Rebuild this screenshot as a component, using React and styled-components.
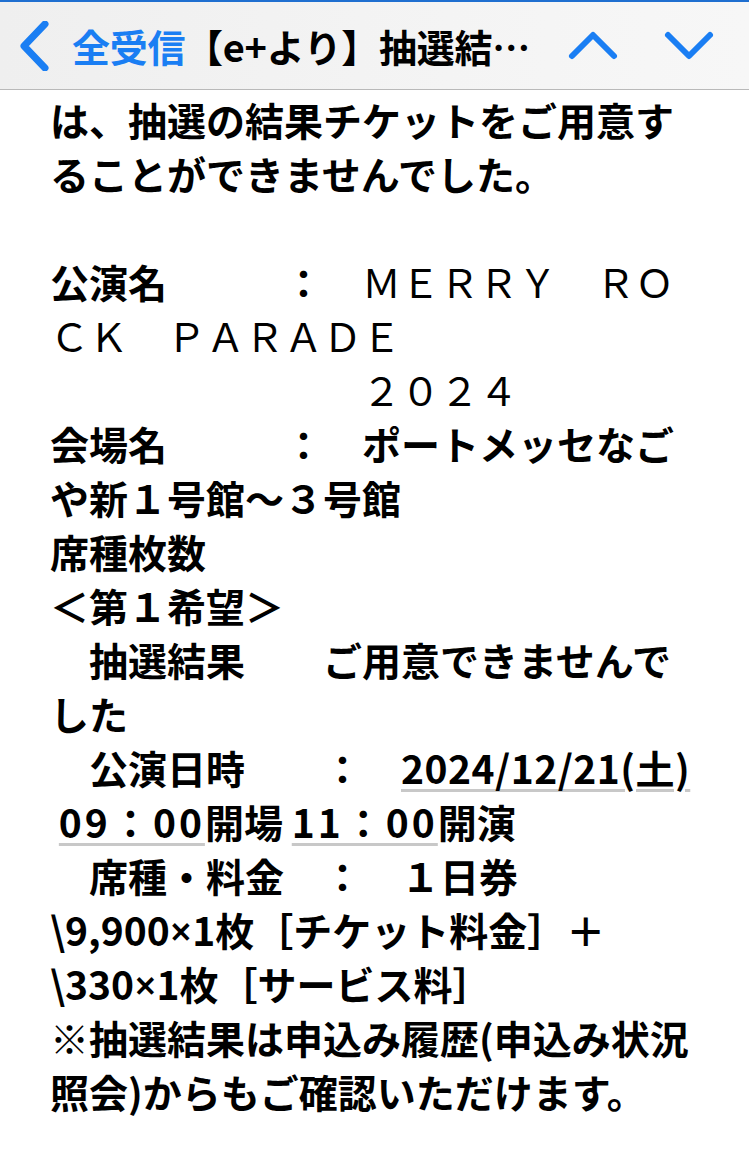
import React from "react";
import styled, { createGlobalStyle } from "styled-components";

const Global = createGlobalStyle`
  html, body { margin: 0; padding: 0; background: #ffffff; }
  body { font-family: "Noto Sans CJK JP", "Noto Sans", sans-serif; }
`;

const Screen = styled.div`
  width: 749px;
  min-height: 1170px;
  background: #ffffff;
  display: flex;
  flex-direction: column;
`;

const NavBar = styled.header`
  height: 87px;
  border-top: 2px solid #1f6fd0;
  border-bottom: 1px solid #b9b9b9;
  background: linear-gradient(90deg, #efefef 0%, #f4f4f4 60%, #f7f7f7 100%);
  display: flex;
  align-items: center;
  padding: 0 34px 0 14px;
`;

const IconButton = styled.svg`
  flex: none;
  display: block;
  margin-right: ${(p) => p.$gap || 0}px;
`;

const Title = styled.h1`
  flex: 1;
  margin: 0;
  font-size: 38px;
  font-weight: 700;
  letter-spacing: -0.3px;
  color: #000000;
  white-space: nowrap;
  line-height: 1.3;
`;

const Back = styled.span`
  color: #1a7ef3;
`;

const NavArrows = styled.div`
  display: flex;
  align-items: center;
  gap: 44px;
`;

const Body = styled.main`
  padding: 2px 20px 0 50px;
  color: #000000;
  font-size: 39px;
  font-weight: 700;
`;

const Line = styled.p`
  margin: 0;
  height: 54px;
  line-height: 54px;
  white-space: pre;
`;

const Wide = styled.span`
  font-weight: 400;
`;

const Narrow = styled.span`
  font-family: "Noto Sans", sans-serif;
  font-weight: 600;
`;

const Detected = styled.span`
  text-decoration: underline;
  text-decoration-color: #c8c8c8;
  text-decoration-thickness: 3px;
  text-underline-offset: 5px;
  letter-spacing: ${(p) => p.$spacing || 0}px;
`;

const BLUE = "#1a7ef3";

function Chevron({ dir, width, height, gap }) {
  const paths = {
    left: "M31 3 L10 25 L31 47",
    up: "M5 27 L26 6 L47 27",
    down: "M5 6 L26 27 L47 6",
  };
  const sw = dir === "left" ? 7 : 6;
  return (
    <IconButton
      width={width}
      height={height}
      viewBox={`0 0 ${width} ${height}`}
      $gap={gap}
      aria-hidden="true"
    >
      <path
        d={paths[dir]}
        fill="none"
        stroke={BLUE}
        strokeWidth={sw}
        strokeLinecap="round"
        strokeLinejoin="round"
      />
    </IconButton>
  );
}

export default function App() {
  return (
    <Screen>
      <Global />
      <NavBar>
        <Chevron dir="left" width={36} height={50} gap={22} />
        <Title>
          <Back>全受信</Back>【e+より】抽選結…
        </Title>
        <NavArrows>
          <Chevron dir="up" width={52} height={33} />
          <Chevron dir="down" width={52} height={33} />
        </NavArrows>
      </NavBar>
      <Body>
        <Line>は、抽選の結果チケットをご用意す</Line>
        <Line>ることができませんでした。</Line>
        <Line>{" "}</Line>
        <Line>
          {"公演名　　　：　"}
          <Wide>ＭＥＲＲＹ　ＲＯ</Wide>
        </Line>
        <Line>
          <Wide>ＣＫ　ＰＡＲＡＤＥ</Wide>
        </Line>
        <Line>
          <Wide>{"　　　　　　　　２０２４"}</Wide>
        </Line>
        <Line>{"会場名　　　：　ポートメッセなご"}</Line>
        <Line>や新１号館～３号館</Line>
        <Line>席種枚数</Line>
        <Line>＜第１希望＞</Line>
        <Line>{"　抽選結果　　ご用意できませんで"}</Line>
        <Line>した</Line>
        <Line>
          {"　公演日時　　：　"}
          <Detected $spacing={0.5}>2024/12/21(土)</Detected>
        </Line>
        <Line>
          {" "}
          <Detected $spacing={3}>09：00</Detected>
          {"開場 "}
          <Detected $spacing={3}>11：00</Detected>
          {"開演"}
        </Line>
        <Line>{"　席種・料金　：　１日券"}</Line>
        <Line>
          {"\\9,900"}
          <Narrow>×</Narrow>
          {"1枚［チケット料金］＋"}
        </Line>
        <Line>
          {"\\330"}
          <Narrow>×</Narrow>
          {"1枚［サービス料］"}
        </Line>
        <Line>※抽選結果は申込み履歴(申込み状況</Line>
        <Line>照会)からもご確認いただけます。</Line>
      </Body>
    </Screen>
  );
}
